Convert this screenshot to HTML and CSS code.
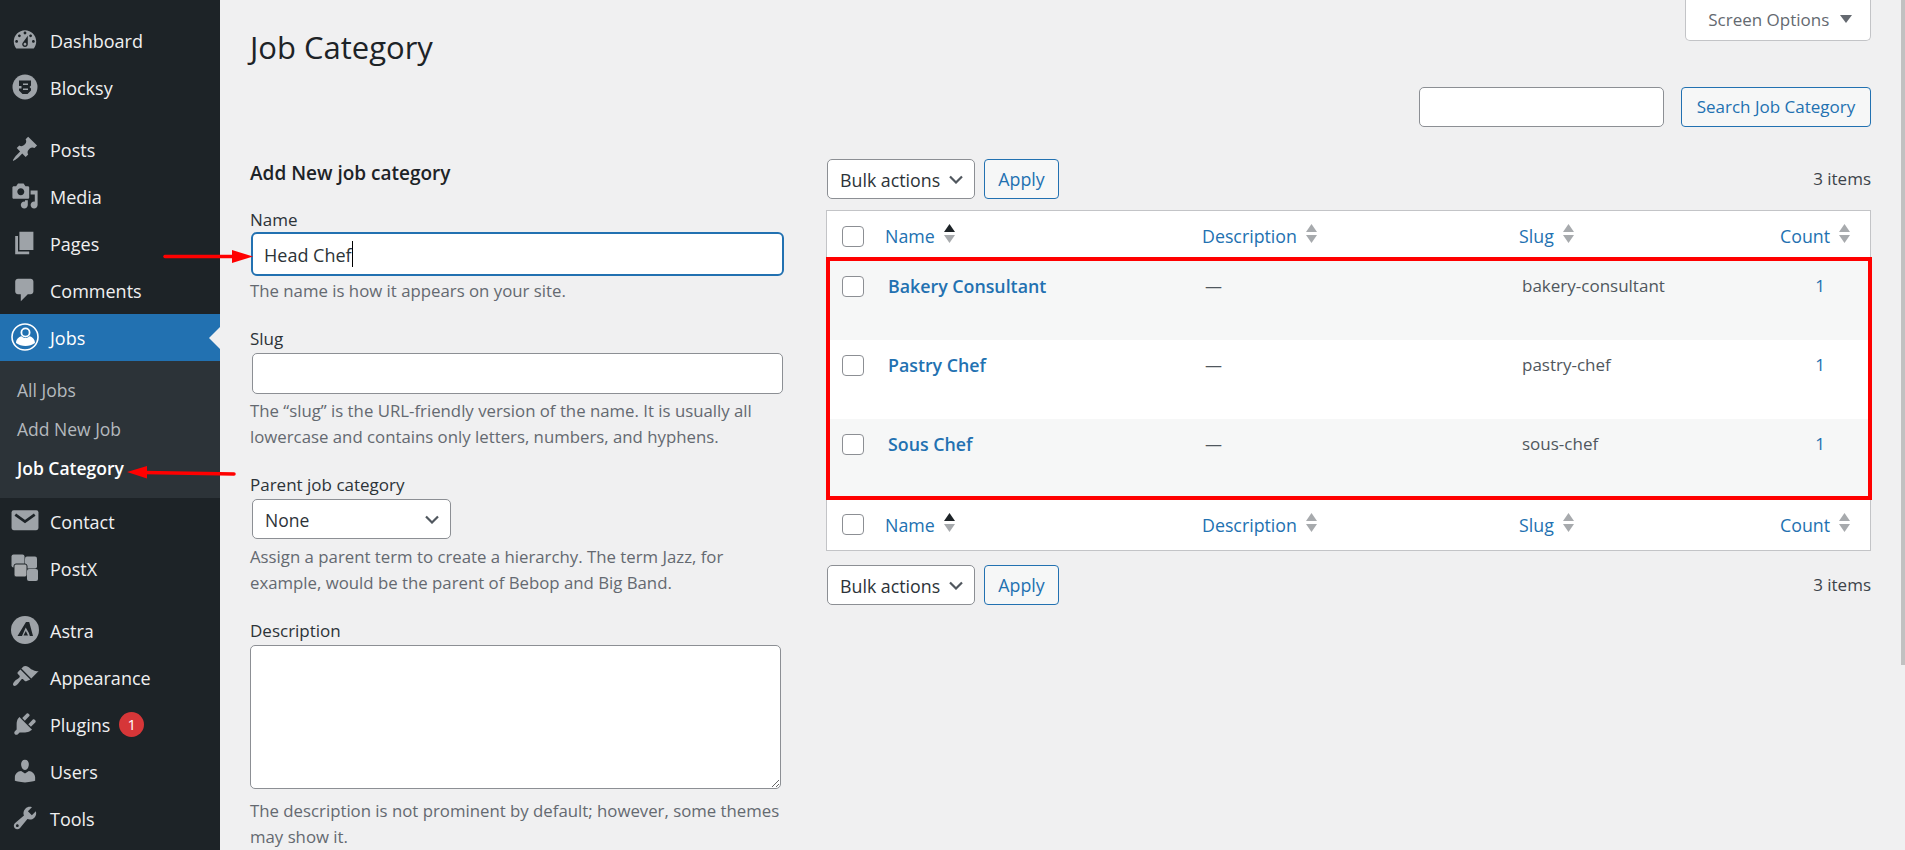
FILE: index.html
```html
<!DOCTYPE html>
<html lang="en">
<head>
<meta charset="utf-8">
<title>Job Category</title>
<link rel="stylesheet" href="styles.css">
</head>
<body>
<aside class="sidebar">
  <ul class="menu">
    <li class="item"><svg class="ico" viewBox="0 0 20 20"><path fill-rule="evenodd" d="M3.76 16h12.48c1.1-1.37 1.76-3.11 1.76-5 0-4.42-3.58-8-8-8s-8 3.58-8 8c0 1.89.66 3.63 1.76 5zM10 4c.55 0 1 .45 1 1s-.45 1-1 1-1-.45-1-1 .45-1 1-1zM6 6c.55 0 1 .45 1 1s-.45 1-1 1-1-.45-1-1 .45-1 1-1zm8 0c.55 0 1 .45 1 1s-.45 1-1 1-1-.45-1-1 .45-1 1-1zm-5.37 5.55L12 7v6c0 1.1-.9 2-2 2s-2-.9-2-2c0-.57.24-1.08.63-1.45zM4 10c.55 0 1 .45 1 1s-.45 1-1 1-1-.45-1-1 .45-1 1-1zm12 0c.55 0 1 .45 1 1s-.45 1-1 1-1-.45-1-1 .45-1 1-1zm-5 3c0-.55-.45-1-1-1s-1 .45-1 1 .45 1 1 1 1-.45 1-1z"/></svg><span>Dashboard</span></li>
    <li class="item"><svg class="ico" viewBox="0 0 28 28"><circle cx="14" cy="14" r="12.500"/><path class="cut" d="M8 7.500h12v5l-1.500 1.500 1.500 1.500v2L16.500 21h-5L8 17.500v-2h2.500V13H8z"/><path d="M12 10.500h5v1.500h-5zM12 15.500h5V17h-5z"/></svg><span>Blocksy</span></li>
    <li class="item sep"><svg class="ico" viewBox="0 0 20 20"><path d="M10.44 3.02l1.82-1.82 6.36 6.35-1.83 1.82c-1.05-.68-2.48-.57-3.41.36l-.75.75c-.92.93-1.04 2.35-.35 3.41l-1.83 1.82-2.41-2.41-2.8 2.79c-.42.42-3.38 2.71-3.8 2.29s1.86-3.39 2.28-3.81l2.79-2.79L4.1 9.36l1.83-1.82c1.05.69 2.48.57 3.4-.36l.75-.75c.93-.92 1.05-2.35.36-3.41z"/></svg><span>Posts</span></li>
    <li class="item"><svg class="ico" viewBox="0 0 20 20"><path fill-rule="evenodd" d="M13 11V4c0-.55-.45-1-1-1h-1.67L9 1H5L3.67 3H2c-.55 0-1 .45-1 1v7c0 .55.45 1 1 1h10c.55 0 1-.45 1-1zM7 4.5c1.38 0 2.5 1.12 2.5 2.5S8.38 9.5 7 9.5 4.5 8.38 4.5 7 5.62 4.5 7 4.5zM14 6h5v10.5c0 1.38-1.12 2.5-2.5 2.5S14 17.88 14 16.5s1.12-2.5 2.5-2.5c.17 0 .34.02.5.05V9h-3V6zm-4 8.05V13h2v3.5c0 1.38-1.12 2.5-2.5 2.5S7 17.88 7 16.5 8.12 14 9.5 14c.17 0 .34.02.5.05z"/></svg><span>Media</span></li>
    <li class="item"><svg class="ico" viewBox="0 0 20 20"><path d="M6 15V2h10v13H6zm-1 1h8v2H3V5h2v11z"/></svg><span>Pages</span></li>
    <li class="item"><svg class="ico" viewBox="0 0 20 20"><path d="M5 2h9c1.1 0 2 .9 2 2v7c0 1.1-.9 2-2 2h-2l-5 5v-5H5c-1.1 0-2-.9-2-2V4c0-1.1.9-2 2-2z"/></svg><span>Comments</span></li>
    <li class="item current"><svg class="ico" viewBox="0 0 28 28"><circle class="ring" cx="14" cy="14" r="13"/><path class="solid" fill-rule="evenodd" d="M14.500 4.500a5 5 0 1 1 0 10 5 5 0 0 1 0-10zm0 1.800a3.200 3.200 0 1 0 0 6.400 3.200 3.200 0 0 0 0-6.400z"/><path class="solid" d="M5 20c0-3.600 2.600-6.200 5.600-6.800 1 1.100 2.400 1.800 3.900 1.800s2.900-.7 3.900-1.800c3 .6 5.600 3.200 5.600 6.800-2.800 1.900-6 3-9.500 3S7.800 21.900 5 20z"/></svg><span>Jobs</span></li>
    <li class="sub">
      <a class="sub-link">All Jobs</a>
      <a class="sub-link">Add New Job</a>
      <a class="sub-link active">Job Category</a>
    </li>
    <li class="item"><svg class="ico" viewBox="0 0 26 26"><rect x="0.500" y="3" width="25" height="18.500" rx="2"/><path class="chev" d="M4 7l9 6.500L22 7"/></svg><span>Contact</span></li>
    <li class="item"><svg class="ico postx" viewBox="0 0 28 28"><rect x="0.500" y="0.500" width="13" height="13" rx="2"/><rect x="14" y="2.500" width="12" height="12" rx="2"/><rect x="3" y="10" width="13" height="13" rx="2" class="front"/><rect x="16" y="15" width="11" height="12" rx="2"/></svg><span>PostX</span></li>
    <li class="item sep"><svg class="ico" viewBox="0 0 28 28"><circle cx="14" cy="14" r="14"/><path class="cut" d="M15 6h3.200L22 20h-3.200l-.9-3-3.200-5.500L11 20H6.500zM14.800 15l2.200 4.500h-4.500z"/></svg><span>Astra</span></li>
    <li class="item"><svg class="ico" viewBox="0 0 20 20"><path d="M14.480 11.060L7.410 3.990l1.500-1.500c.5-.56 2.300-.47 3.510.32 1.210.8 1.430 1.280 2.910 2.100 1.180.64 2.450 1.260 4.450.85zm-.71.71L6.700 4.700 4.930 6.470c-.39.39-.39 1.020 0 1.410l1.060 1.060c.39.39.39 1.030 0 1.420-.6.6-1.430 1.110-2.210 1.690-.35.26-.7.53-1.010.84-1.200 1.180-1.750 2.450-1.050 3.150s1.970.15 3.150-1.050c.31-.31.58-.66.84-1.010.58-.78 1.090-1.610 1.690-2.210.39-.39 1.030-.39 1.420 0l1.060 1.060c.39.39 1.020.39 1.410 0z"/></svg><span>Appearance</span></li>
    <li class="item"><svg class="ico" viewBox="0 0 20 20"><path d="M13.110 4.360L9.870 7.600 8 5.730l3.240-3.240c.35-.34 1.050-.2 1.560.32.52.51.66 1.210.31 1.550zm-8 1.770l.91-1.120 9.010 9.010-1.190.84c-.71.71-2.630 1.160-3.820 1.160H6.140L4.900 17.260c-.59.59-1.540.59-2.120 0-.59-.58-.59-1.530 0-2.120l1.240-1.240v-3.880c0-1.130.4-3.190 1.090-3.890zm7.260 3.970l3.240-3.240c.34-.35 1.040-.21 1.550.31.52.51.66 1.210.31 1.550l-3.240 3.250z"/></svg><span>Plugins</span><b class="badge">1</b></li>
    <li class="item"><svg class="ico" viewBox="0 0 20 20"><path d="M10 9.250c-2.270 0-2.730-3.440-2.730-3.440C7 4.020 7.820 2 9.970 2c2.160 0 2.980 2.020 2.710 3.810 0 0-.41 3.440-2.680 3.440zm0 2.570L12.720 10c2.390 0 4.520 2.330 4.520 4.530v2.490s-3.650 1.130-7.240 1.130c-3.650 0-7.240-1.130-7.240-1.130v-2.490c0-2.250 1.940-4.480 4.470-4.480z"/></svg><span>Users</span></li>
    <li class="item"><svg class="ico" viewBox="0 0 20 20"><path fill-rule="evenodd" d="M16.680 9.770c-1.340 1.340-3.300 1.670-4.950.99l-5.410 6.520c-.99.99-2.590.99-3.580 0s-.99-2.590 0-3.570l6.520-5.420c-.68-1.650-.35-3.610.99-4.950 1.280-1.280 3.120-1.620 4.720-1.060l-2.890 2.890 2.820 2.820 2.860-2.870c.53 1.580.18 3.390-1.080 4.650zM3.810 16.210c.4.39 1.040.39 1.430 0 .4-.4.4-1.040 0-1.430-.39-.4-1.030-.4-1.430 0-.39.39-.39 1.030 0 1.430z"/></svg><span>Tools</span></li>
  </ul>
</aside>

<main class="main">
  <header class="top">
    <h1 class="title">Job Category</h1>
    <button class="screen-options">Screen Options <i class="tri"></i></button>
  </header>
  <div class="search">
    <input class="field search-input" type="text">
    <button class="btn search-btn">Search Job Category</button>
  </div>
  <div class="columns">
    <form class="form">
      <h2 class="form-title">Add New job category</h2>
      <label class="label first">Name</label>
      <div class="name-wrap">
        <input class="field name-input" type="text" value="Head Chef">
        <i class="caret"></i>
      </div>
      <p class="hint hint-name">The name is how it appears on your site.</p>
      <label class="label">Slug</label>
      <input class="field slug-input" type="text">
      <p class="hint hint-slug">The “slug” is the URL-friendly version of the name. It is usually all lowercase and contains only letters, numbers, and hyphens.</p>
      <label class="label">Parent job category</label>
      <select class="field picker parent-select"><option>None</option></select>
      <p class="hint hint-parent">Assign a parent term to create a hierarchy. The term Jazz, for example, would be the parent of Bebop and Big Band.</p>
      <label class="label">Description</label>
      <textarea class="field desc-input"></textarea>
      <p class="hint hint-desc">The description is not prominent by default; however, some themes may show it.</p>
    </form>

    <section class="list">
      <div class="tablenav">
        <select class="field picker bulk"><option>Bulk actions</option></select>
        <button class="btn apply" type="button">Apply</button>
        <span class="count-label">3 items</span>
      </div>
      <div class="table-wrap">
        <table class="table">
          <colgroup><col class="c-cb"><col class="c-name"><col class="c-desc"><col class="c-slug"><col class="c-count"></colgroup>
          <thead>
            <tr>
              <th class="cb"><i class="check"></i></th>
              <th><a class="sort">Name <svg class="arrows" viewBox="0 0 11 20"><path class="on" d="M5.500 0L11 8H0z"/><path d="M0 11h11l-5.500 8z"/></svg></a></th>
              <th><a class="sort">Description <svg class="arrows" viewBox="0 0 11 20"><path d="M5.500 0L11 8H0z"/><path d="M0 11h11l-5.500 8z"/></svg></a></th>
              <th><a class="sort">Slug <svg class="arrows" viewBox="0 0 11 20"><path d="M5.500 0L11 8H0z"/><path d="M0 11h11l-5.500 8z"/></svg></a></th>
              <th><a class="sort">Count <svg class="arrows" viewBox="0 0 11 20"><path d="M5.500 0L11 8H0z"/><path d="M0 11h11l-5.500 8z"/></svg></a></th>
            </tr>
          </thead>
          <tbody>
            <tr class="alt"><td class="cb"><i class="check"></i></td><td><a class="term">Bakery Consultant</a></td><td>—</td><td>bakery-consultant</td><td class="num"><a>1</a></td></tr>
            <tr><td class="cb"><i class="check"></i></td><td><a class="term">Pastry Chef</a></td><td>—</td><td>pastry-chef</td><td class="num"><a>1</a></td></tr>
            <tr class="alt"><td class="cb"><i class="check"></i></td><td><a class="term">Sous Chef</a></td><td>—</td><td>sous-chef</td><td class="num"><a>1</a></td></tr>
          </tbody>
          <tfoot>
            <tr>
              <th class="cb"><i class="check"></i></th>
              <th><a class="sort">Name <svg class="arrows" viewBox="0 0 11 20"><path class="on" d="M5.500 0L11 8H0z"/><path d="M0 11h11l-5.500 8z"/></svg></a></th>
              <th><a class="sort">Description <svg class="arrows" viewBox="0 0 11 20"><path d="M5.500 0L11 8H0z"/><path d="M0 11h11l-5.500 8z"/></svg></a></th>
              <th><a class="sort">Slug <svg class="arrows" viewBox="0 0 11 20"><path d="M5.500 0L11 8H0z"/><path d="M0 11h11l-5.500 8z"/></svg></a></th>
              <th><a class="sort">Count <svg class="arrows" viewBox="0 0 11 20"><path d="M5.500 0L11 8H0z"/><path d="M0 11h11l-5.500 8z"/></svg></a></th>
            </tr>
          </tfoot>
        </table>
        <div class="highlight"></div>
      </div>
      <div class="tablenav tablenav-bottom">
        <select class="field picker bulk"><option>Bulk actions</option></select>
        <button class="btn apply" type="button">Apply</button>
        <span class="count-label">3 items</span>
      </div>
    </section>
  </div>
</main>

<svg class="annotations" viewBox="0 0 1905 850">
  <path class="arrow-line" d="M165 256.500H236"/>
  <path class="arrow-head" d="M232 250L253 256.500L232 263z"/>
  <path class="arrow-line" d="M234 474L144 472.500"/>
  <path class="arrow-head" d="M147 466L127 472L147 478.500z"/>
</svg>
<div class="scroll-thumb"></div>
</body>
</html>
```

FILE: styles.css
```css
* { box-sizing: border-box; }
html, body { margin: 0; height: 850px; overflow: hidden; }
body {
  display: flex;
  background: #f0f0f1;
  color: #3c434a;
  font-family: "Open Sans", "Noto Sans", sans-serif;
  font-size: 17px;
  line-height: 26px;
  position: relative;
}

/* Sidebar */
.sidebar { width: 220px; flex: none; background: #1d2327; height: 850px; }
.menu { list-style: none; margin: 0; padding: 17px 0 0; }
.item {
  height: 47px;
  display: flex;
  align-items: center;
  color: #f0f0f1;
  font-size: 18px;
  position: relative;
  padding-left: 50px;
}
.item.sep { margin-top: 15px; }
.ico {
  position: absolute;
  left: 11px;
  top: 9px;
  width: 28px;
  height: 28px;
  fill: #9ea3a8;
}
.ico .cut { fill: #1d2327; }
.ico .chev { fill: none; stroke: #1d2327; stroke-width: 2.500; }
.ico .front { stroke: #1d2327; stroke-width: 1; fill: #a7aaad; }
.item.current { background: #2271b1; color: #fff; }
.item.current::after {
  content: "";
  position: absolute;
  right: 0;
  top: 13px;
  border: 11px solid transparent;
  border-right-color: #f0f0f1;
  border-left-width: 0;
}
.item.current .ico .ring { fill: none; stroke: #fff; stroke-width: 1.600; }
.item.current .ico .solid { fill: #fff; }
.badge {
  width: 25px;
  height: 25px;
  border-radius: 50%;
  background: #d63638;
  color: #fff;
  font-size: 15px;
  font-weight: 400;
  line-height: 25px;
  text-align: center;
  margin-left: 9px;
}
.sub {
  background: #2c3338;
  padding: 10px 0;
  height: 137px;
  display: flex;
  flex-direction: column;
}
.sub-link {
  height: 39px;
  line-height: 39px;
  padding-left: 17px;
  font-size: 17.500px;
  color: #b4b9be;
}
.sub-link.active { color: #fff; font-weight: 600; }

/* Main */
.main { flex: 1; padding: 0 34px 0 30px; min-width: 0; }
.top { display: flex; justify-content: space-between; align-items: flex-start; height: 87px; }
.title {
  margin: 25px 0 0;
  font-size: 31px;
  font-weight: 400;
  line-height: 44px;
  color: #1d2327;
}
.screen-options {
  width: 186px;
  height: 41px;
  background: #fff;
  border: 1px solid #c3c4c7;
  border-top: 0;
  border-radius: 0 0 5px 5px;
  color: #646970;
  font: inherit;
  padding: 0 0 0 4px;
}
.tri {
  display: inline-block;
  margin-left: 6px;
  border: 6px solid transparent;
  border-top: 8px solid #646970;
  border-bottom: 0;
  vertical-align: 3px;
}
.search { display: flex; justify-content: flex-end; gap: 17px; height: 40px; }
.field {
  background: #fff;
  border: 1px solid #8c8f94;
  border-radius: 5px;
  font: inherit;
  color: #2c3338;
  display: block;
}
.search-input { width: 245px; height: 40px; }
.btn {
  height: 40px;
  background: #f6f7f7;
  border: 1px solid #2271b1;
  border-radius: 4px;
  color: #2271b1;
  font: inherit;
  padding: 0;
}
.search-btn { width: 190px; }
.columns { display: flex; align-items: flex-start; }

/* Form */
.form { width: 534px; flex: none; margin-top: 33px; margin-right: 42px; }
.form-title { margin: 0; font-size: 19px; font-weight: 600; line-height: 26px; color: #1d2327; }
.label { display: block; margin-top: 22px; height: 27px; padding-left: 0; color: #2c3338; }
.label.first { margin-top: 21px; height: 25px; }
.name-wrap { position: relative; margin-left: 1px; width: 533px; }
.name-input {
  width: 100%;
  height: 44px;
  border: 2px solid #2271b1;
  border-radius: 6px;
  padding: 2px 11px 0;
  outline: 0;
  font-size: 18px;
}
.caret { position: absolute; left: 101px; top: 9px; width: 1px; height: 26px; background: #000; }
.slug-input { width: 531px; height: 41px; margin-left: 2px; }
.hint { margin: 4px 0 0; color: #646970; font-size: 16.800px; }
.hint-name { margin-top: 2px; }
.hint-parent { margin-top: 5px; }
.hint-desc { margin-top: 9px; }
.picker {
  appearance: none;
  -webkit-appearance: none;
  background: #fff url("data:image/svg+xml,%3Csvg xmlns='http://www.w3.org/2000/svg' width='14' height='9' viewBox='0 0 14 9'%3E%3Cpath d='M1 1.500l6 6 6-6' fill='none' stroke='%2350575e' stroke-width='2.200'/%3E%3C/svg%3E") no-repeat right 11px center;
}
.parent-select { width: 199px; height: 40px; margin-left: 2px; padding: 2px 12px 0; font-size: 17.500px; }
.desc-input { width: 531px; height: 144px; resize: vertical; }

/* List */
.list { flex: 1; margin-top: 32px; min-width: 0; }
.tablenav { display: flex; align-items: center; height: 40px; padding-left: 1px; }
.bulk { width: 148px; height: 40px; padding: 2px 12px 0; font-size: 17.800px; }
.apply { width: 75px; margin-left: 9px; font-size: 17.800px; }
.count-label { margin-left: auto; color: #3c434a; }
.table-wrap { position: relative; margin-top: 11px; }
.table {
  width: 1045px;
  table-layout: fixed;
  border-collapse: separate;
  border-spacing: 0;
  background: #fff;
  border: 1px solid #c3c4c7;
  font-size: 17px;
}
.c-cb { width: 48px; }
.c-name { width: 317px; }
.c-desc { width: 317px; }
.c-slug { width: 261px; }
.c-count { width: 100px; }
th { height: 50px; padding: 0 0 0 10px; text-align: left; font-weight: 400; font-size: 17.800px; }
tfoot th { height: 52px; padding-top: 2px; }
td { height: 79px; padding: 12px 0 0 13px; vertical-align: top; color: #50575e; }
.alt { background: #f6f7f7; }
.cb { padding: 0 0 0 15px; vertical-align: middle; }
td.cb { vertical-align: top; padding-top: 15px; }
.check {
  display: block;
  width: 22px;
  height: 21px;
  background: #fff;
  border: 1px solid #8c8f94;
  border-radius: 4px;
}
a { color: #2271b1; }
.sort { display: inline-flex; align-items: center; gap: 9px; }
.arrows { width: 11px; height: 20px; fill: #a7aaad; margin-top: -4px; }
.arrows .on { fill: #1d2327; }
.term { font-weight: 600; font-size: 17.800px; }
.num { text-align: center; padding-left: 0; }
.highlight {
  position: absolute;
  left: 0;
  top: 47px;
  width: 1046px;
  height: 243px;
  border: 4px solid #f00;
  pointer-events: none;
}
.tablenav-bottom { margin-top: 14px; }

/* Overlays */
.annotations { position: absolute; left: 0; top: 0; width: 1905px; height: 850px; pointer-events: none; }
.arrow-line { fill: none; stroke: #f00; stroke-width: 3.500; stroke-linecap: round; }
.arrow-head { fill: #f00; }
.scroll-thumb { position: absolute; right: 0; top: 0; width: 4px; height: 665px; background: #c1c1c1; }
```
